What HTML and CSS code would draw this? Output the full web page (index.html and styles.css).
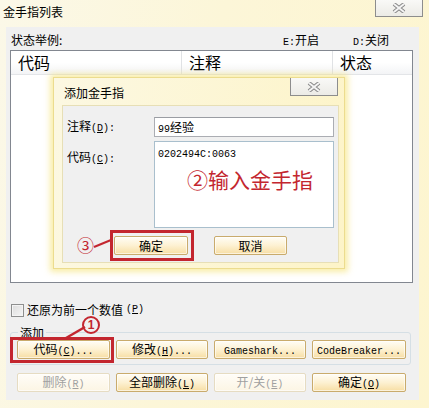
FILE: index.html
```html
<!doctype html>
<html lang="zh-CN">
<head>
<meta charset="utf-8">
<title>金手指列表</title>
<link rel="stylesheet" href="styles.css">
</head>
<body>

  <div class="window">
    <div class="titlebar">
      <span class="title">金手指列表</span>
      <button class="close">
        <svg width="16" height="10" viewBox="0 0 16 10"><path d="M3 1 L13 9 M13 1 L3 9" stroke="#8a8a8a" stroke-width="4"/><path d="M3 1 L13 9 M13 1 L3 9" stroke="#f4f4f4" stroke-width="2"/></svg>
      </button>
    </div>

    <div class="client">
      <div class="status">
        <span class="status-label">状态举例:</span>
        <span class="legend-e"><span class="lat">E:</span>开启</span>
        <span class="legend-d"><span class="lat">D:</span>关闭</span>
      </div>

      <div class="list">
        <div class="list-head">
          <div class="col col-code">代码</div>
          <div class="col col-note">注释</div>
          <div class="col col-state">状态</div>
        </div>
      </div>

      <label class="check-row">
        <span class="checkbox"></span>
        还原为前一个数值<span class="lat">(<u>P</u>)</span>
      </label>

      <fieldset class="group">
        <legend>添加</legend>
        <div class="btn-row">
          <button class="btn">代码<span class="lat">(<u>C</u>)...</span></button>
          <button class="btn">修改<span class="lat">(<u>H</u>)...</span></button>
          <button class="btn"><span class="lat">Gameshark...</span></button>
          <button class="btn"><span class="lat">CodeBreaker...</span></button>
        </div>
      </fieldset>

      <div class="btn-row bottom-row">
        <button class="btn" disabled>删除<span class="lat">(<u>R</u>)</span></button>
        <button class="btn">全部删除<span class="lat">(<u>L</u>)</span></button>
        <button class="btn" disabled>开/关<span class="lat">(<u>E</u>)</span></button>
        <button class="btn">确定<span class="lat">(<u>O</u>)</span></button>
      </div>
    </div>
  </div>

  <!-- dialog on top of the list -->
  <div class="dialog">
    <div class="dlg-titlebar">
      <span class="title">添加金手指</span>
      <button class="close dlg-close">
        <svg width="16" height="10" viewBox="0 0 16 10"><path d="M3 1 L13 9 M13 1 L3 9" stroke="#8a8a8a" stroke-width="4"/><path d="M3 1 L13 9 M13 1 L3 9" stroke="#f4f4f4" stroke-width="2"/></svg>
      </button>
    </div>
    <div class="dlg-body">
      <div class="field">
        <span class="field-label">注释<span class="lat">(<u>D</u>):</span></span>
        <div class="input"><span class="lat">99</span>经验</div>
      </div>
      <div class="field field-code">
        <span class="field-label">代码<span class="lat">(<u>C</u>):</span></span>
        <div class="textarea"><span class="lat">0202494C:0063</span></div>
      </div>
      <div class="dlg-buttons">
        <button class="btn btn-ok">确定</button>
        <button class="btn btn-cancel">取消</button>
      </div>
    </div>
  </div>

  <!-- annotations -->
  <div class="note note-2">②输入金手指</div>
  <div class="mark mark-ok"></div>
  <div class="mark mark-code"></div>
  <div class="num num-3">③</div>
  <div class="badge">1</div>
  <svg class="lines" width="429" height="408">
    <path d="M94 247 L111 240" stroke="#c3262f" stroke-width="2" fill="none"/>
    <path d="M66 338 L85 327" stroke="#c3262f" stroke-width="2.5" fill="none"/>
  </svg>

</body>
</html>
```

FILE: styles.css
```css
* { box-sizing: border-box; }

body {
	margin: 0;
	width: 429px;
	height: 408px;
	overflow: hidden;
	position: relative;
	background: linear-gradient(100deg, #fbf8e8 0%, #fcf6d8 45%, #fdf5cf 100%);
	color: #000;
	font-family: "Noto Sans CJK SC", sans-serif;
	font-size: 12px;
	line-height: 14px;
}

.lat {
	font-family: "Liberation Mono", monospace;
	font-size: 10px;
}

u { text-decoration-thickness: 1px; text-underline-offset: 1px; }

button { font: inherit; color: inherit; padding: 0; }

/* ---- main window ---- */

.titlebar {
	display: flex;
	justify-content: space-between;
	align-items: flex-start;
	height: 27px;
}

.titlebar .title {
	margin: 5px 0 0 3px;
}

.close {
	width: 48px;
	height: 17px;
	border: 1px solid #8d8d8d;
	border-top: none;
	background: linear-gradient(#f9f9f7, #ecebe6);
	display: flex;
	align-items: center;
	justify-content: center;
	margin-right: 6px;
}

.client {
	margin-left: 6px;
	width: 413px;
	height: 373px;
	background: #f0f0f0;
	padding: 0 0 0 4px;
}

.status {
	display: flex;
	height: 23px;
	padding-top: 6px;
}

.status-label { margin-left: 1px; width: 272px; }
.legend-e { width: 70px; }

.list {
	width: 403px;
	height: 233px;
	background: #fff;
	border: 1px solid #828790;
}

.list-head {
	display: flex;
	height: 24px;
	background: linear-gradient(#fff, #fff 50%, #f3f4f6);
	border-bottom: 1px solid #e3e5e8;
	font-size: 16px;
	line-height: 22px;
}

.col { padding-left: 7px; border-right: 1px solid #e0e2e5; }
.col-code { width: 171px; }
.col-note { width: 151px; }
.col-state { border-right: none; flex: 1; }

.check-row {
	display: flex;
	align-items: center;
	gap: 3px;
	margin: 20px 0 0 1px;
	height: 14px;
	line-height: 14px;
}

.checkbox {
	width: 13px;
	height: 13px;
	border: 1px solid #8e8f8f;
	background: linear-gradient(135deg, #dcdcdc, #f6f6f6);
	box-shadow: inset 0 0 0 1px #f4f4f4;
}

.group {
	margin: 9px 0 0 0;
	width: 401px;
	height: 39px;
	border: 1px solid #d5dfe5;
	border-radius: 3px;
	padding: 0 0 0 6px;
}

.group legend {
	padding: 0 2px;
	margin-left: 1px;
	line-height: 13px;
}

.btn-row {
	display: grid;
	grid-template-columns: 93px 92px 92px 94px;
	column-gap: 6px;
	margin-top: 1px;
}

.bottom-row {
	margin: 8px 0 0 7px;
}

.btn {
	height: 19px;
	border: 1px solid #c9ab6c;
	border-radius: 2px;
	background: linear-gradient(#fffdf6, #fdf1d2 50%, #f7dea4);
	box-shadow: inset 0 0 0 1px rgba(255,255,255,0.6);
	text-align: center;
	line-height: 16px;
}

.btn:disabled {
	color: #a0a0a0;
	border-color: #e6dcc2;
	background: linear-gradient(#fffdf8, #fcf5e4);
}

/* ---- dialog ---- */

.dialog {
	position: absolute;
	left: 53px;
	top: 77px;
	width: 292px;
	height: 192px;
	background: linear-gradient(100deg, #fcf8e2, #fdf4c8);
	border: 1px solid #ecdc8e;
	box-shadow: 0 0 6px 3px rgba(246, 228, 120, 0.65);
}

.dlg-titlebar {
	display: flex;
	justify-content: space-between;
	align-items: flex-start;
	height: 27px;
}

.dlg-titlebar .title {
	margin: 8px 0 0 10px;
}

.dlg-close { margin-right: 6px; height: 18px; }

.dlg-body {
	margin-left: 8px;
	width: 277px;
	height: 158px;
	background: #f0f0f0;
	border: 1px solid #e7dfb6;
	padding: 11px 0 0 4px;
}

.field {
	display: flex;
	align-items: center;
}

.field-label { width: 87px; }

.input {
	width: 180px;
	height: 20px;
	background: #fff;
	border: 1px solid #abadb3;
	border-top-color: #9a9da3;
	padding: 2px 0 0 3px;
}

.field-code {
	align-items: flex-start;
	margin-top: 4px;
}

.field-code .field-label { margin-top: 9px; }

.textarea {
	width: 180px;
	height: 87px;
	background: #fff;
	border: 1px solid #a9bfcd;
	padding: 3px 0 0 3px;
}

.dlg-buttons {
	display: flex;
	margin: 8px 0 0 47px;
	gap: 26px;
}

.btn-ok { width: 74px; height: 19px; }
.btn-cancel { width: 73px; height: 19px; }

/* ---- red annotations ---- */

.note {
	position: absolute;
	left: 187px;
	top: 167px;
	color: #c3262f;
	font-size: 21px;
	line-height: 24px;
}

.mark {
	position: absolute;
	border: 3px solid #c3262f;
}

.mark-ok { left: 110px; top: 230px; width: 84px; height: 31px; }
.mark-code { left: 10px; top: 337px; width: 104px; height: 26px; }

.num {
	position: absolute;
	color: #c3262f;
	line-height: 18px;
}

.num-3 { left: 77px; top: 236px; font-size: 17px; }

.badge {
	position: absolute;
	left: 82px;
	top: 316px;
	width: 18px;
	height: 18px;
	border: 2px solid #c3262f;
	border-radius: 50%;
	color: #c3262f;
	font-family: "Liberation Sans", sans-serif;
	font-weight: bold;
	font-size: 12px;
	line-height: 14px;
	text-align: center;
}

.lines {
	position: absolute;
	left: 0;
	top: 0;
}
```
